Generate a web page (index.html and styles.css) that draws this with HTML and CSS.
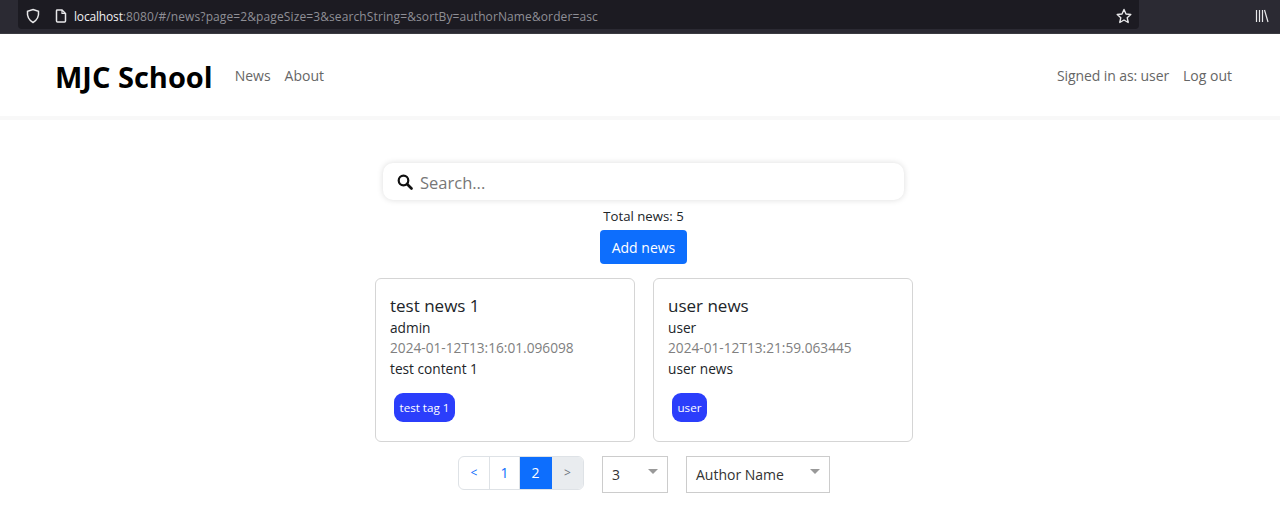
FILE: index.html
```html
<!DOCTYPE html>
<html lang="en">
<head>
  <meta charset="UTF-8">
  <title>MJC School</title>
  <link rel="stylesheet" href="styles.css">
</head>
<body>
  <div class="browser-bar">
    <div class="url-box">
      <svg class="url-icon shield" width="16" height="16" viewBox="0 0 16 16"><path d="M8 1.5 L13.5 3.2 C14 8 12.5 12 8 14.5 C3.500 12 2 8 2.500 3.200 Z" fill="none" stroke="#e8e8ea" stroke-width="1.500"/></svg>
      <svg class="url-icon page" width="14" height="16" viewBox="0 0 14 16"><path d="M3 2 H8 L11.500 5.500 V13 A1 1 0 0 1 10.500 14 H3.500 A1 1 0 0 1 2.500 13 V3 A1 1 0 0 1 3 2 Z" fill="none" stroke="#e8e8ea" stroke-width="1.500"/><path d="M8 2 V5.500 H11.500" fill="none" stroke="#e8e8ea" stroke-width="1.200"/></svg>
      <span class="url-text"><span class="url-host">localhost</span>:8080/#/news?page=2&amp;pageSize=3&amp;searchString=&amp;sortBy=authorName&amp;order=asc</span>
      <svg class="star" width="16" height="16" viewBox="0 0 16 16"><path d="M8 1.500 L10 6 L14.800 6.500 L11.200 9.700 L12.200 14.500 L8 12 L3.800 14.500 L4.800 9.700 L1.200 6.500 L6 6 Z" fill="none" stroke="#e8e8ea" stroke-width="1.400" stroke-linejoin="round"/></svg>
    </div>
    <svg class="library" width="14" height="14" viewBox="0 0 14 14"><path d="M1.500 1 V13 M4.500 1 V13 M7.500 1 V13 M9.500 1 L13 13" fill="none" stroke="#e8e8ea" stroke-width="1.200"/></svg>
  </div>

  <nav class="navbar">
    <a class="brand">MJC School</a>
    <a class="nav-link">News</a>
    <a class="nav-link">About</a>
    <div class="nav-right">
      <a class="nav-link">Signed in as: user</a>
      <a class="nav-link">Log out</a>
    </div>
  </nav>

  <main class="content">
    <div class="search">
      <svg width="16" height="16" viewBox="0 0 16 16"><circle cx="6.500" cy="6.500" r="4.800" fill="none" stroke="#111" stroke-width="2.200"/><path d="M10 10 L14.500 14.500" stroke="#111" stroke-width="2.600" stroke-linecap="round"/></svg>
      <span class="search-text">Search...</span>
    </div>
    <div class="total">Total news: 5</div>
    <button class="add-btn">Add news</button>

    <div class="cards">
      <div class="card">
        <div class="card-title">test news 1</div>
        <div class="card-line">admin</div>
        <div class="card-date">2024-01-12T13:16:01.096098</div>
        <div class="card-line card-body">test content 1</div>
        <span class="tag">test tag 1</span>
      </div>
      <div class="card">
        <div class="card-title">user news</div>
        <div class="card-line">user</div>
        <div class="card-date">2024-01-12T13:21:59.063445</div>
        <div class="card-line card-body">user news</div>
        <span class="tag">user</span>
      </div>
    </div>

    <div class="controls">
      <div class="pagination">
        <span class="page-item page-edge small">&lt;</span>
        <span class="page-item page-narrow">1</span>
        <span class="page-item active">2</span>
        <span class="page-item page-edge disabled small">&gt;</span>
      </div>
      <div class="select size-select">3<i class="caret"></i></div>
      <div class="select sort-select">Author Name<i class="caret"></i></div>
    </div>
  </main>
</body>
</html>
```

FILE: styles.css
```css
* {
  box-sizing: border-box;
}
body {
  margin: 0;
  background: #fff;
  color: #212529;
  font-family: "Open Sans", "Noto Sans", sans-serif;
  font-size: 14px;
  overflow: hidden;
}
.browser-bar {
  height: 34px;
  background: #2b2a33;
  padding-left: 18px;
  display: flex;
  align-items: flex-start;
  border-bottom: 1px solid #3a3a40;
}
.url-box {
  width: 1121px;
  height: 29px;
  background: #1c1b22;
  border-radius: 0 0 4px 4px;
  display: flex;
  align-items: center;
  padding: 3px 7px 0 7px;
}
.url-icon.page {
  margin-left: 13px;
}
.url-text {
  margin-left: 6px;
  font-size: 12px;
  letter-spacing: 0.11px;
  color: #8f8f96;
  white-space: nowrap;
}
.url-host {
  color: #f0f0f2;
  letter-spacing: -0.17px;
}
.star {
  margin-left: auto;
}
.library {
  margin: 9px 0 0 116px;
}
.navbar {
  height: 86px;
  padding: 0 48px 0 55px;
  display: flex;
  align-items: center;
  border-bottom: 4px solid #f8f8f8;
}
.brand {
  font-size: 29px;
  font-weight: 700;
  letter-spacing: 0;
  color: #000;
  margin-right: 22px;
  padding-top: 2px;
}
.nav-link {
  color: #666;
  font-size: 14px;
  margin-right: 14px;
}
.nav-right {
  margin-left: auto;
  display: flex;
}
.nav-right .nav-link {
  letter-spacing: -0.1px;
}
.nav-right .nav-link:last-child {
  margin-right: 0;
  letter-spacing: 0;
}
.content {
  display: flex;
  flex-direction: column;
  align-items: center;
  padding-top: 43px;
  padding-left: 8px;
}
.search {
  width: 521px;
  height: 37px;
  border-radius: 10px;
  box-shadow: 0 0 6px rgba(0, 0, 0, 0.14);
  display: flex;
  align-items: center;
  padding-left: 14px;
  margin-left: -1px;
}
.search-text {
  margin-left: 7px;
  padding-top: 1px;
  font-size: 16.500px;
  color: #777;
}
.total {
  margin-top: 6px;
  margin-left: -1px;
  height: 20px;
  line-height: 20px;
  font-size: 13.200px;
}
.add-btn {
  margin-top: 4px;
  margin-left: -1px;
  width: 87px;
  height: 34px;
  padding: 1px 0 0;
  border: none;
  border-radius: 4px;
  background: #0d6efd;
  color: #fff;
  font-family: inherit;
  font-size: 14px;
}
.cards {
  display: flex;
  gap: 18px;
  margin-top: 14px;
}
.card {
  width: 260px;
  height: 164px;
  border: 1px solid #d5d5d5;
  border-radius: 6px;
  padding: 15px 14px 0;
}
.card-title {
  font-size: 17px;
  line-height: 24px;
}
.card-line {
  font-size: 13.700px;
  line-height: 20px;
}
.card-date {
  font-size: 13.700px;
  line-height: 20px;
  color: #808080;
}
.card-body {
  margin-top: 1px;
}
.tag {
  display: inline-block;
  margin: 14px 0 0 4px;
  padding: 0 5.500px;
  height: 29px;
  line-height: 29px;
  border-radius: 9px;
  background: #2b3efb;
  color: #fff;
  font-size: 11.600px;
}
.controls {
  display: flex;
  align-items: flex-start;
  margin-top: 14px;
}
.pagination {
  display: flex;
  height: 34px;
  border: 1px solid #dee2e6;
  border-radius: 6px;
  overflow: hidden;
}
.page-item {
  width: 32px;
  line-height: 32px;
  text-align: center;
  color: #0d6efd;
  border-right: 1px solid #dee2e6;
  font-size: 14px;
}
.page-item.page-narrow {
  width: 30px;
}
.page-item.page-edge {
  width: 31px;
}
.page-item.small {
  font-size: 12px;
}
.page-item.active {
  background: #0d6efd;
  border-right-color: #0d6efd;
  color: #fff;
}
.page-item.disabled {
  background: #e9ecef;
  color: #6c757d;
  border-right: none;
}
.select {
  position: relative;
  height: 37px;
  border: 1px solid #ccc;
  line-height: 35px;
  padding-left: 9px;
  font-size: 14px;
  color: #333;
}
.size-select {
  width: 66px;
  margin-left: 18px;
}
.sort-select {
  width: 144px;
  margin-left: 18px;
}
.caret {
  position: absolute;
  top: 12px;
  right: 9px;
  border-left: 5px solid transparent;
  border-right: 5px solid transparent;
  border-top: 5px solid #999;
}
```
